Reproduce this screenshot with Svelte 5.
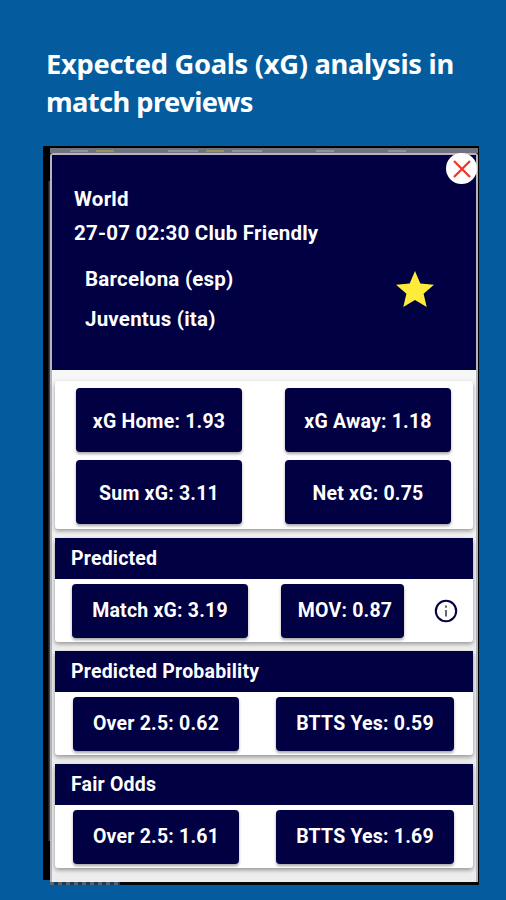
<script lang="ts">
	type Stat = { label: string; value: string; width: number };
	type Section = { title: string; layout: string; info?: boolean; stats: Stat[] };

	const summary: Stat[] = [
		{ label: 'xG Home', value: '1.93', width: 166 },
		{ label: 'xG Away', value: '1.18', width: 166 },
		{ label: 'Sum xG', value: '3.11', width: 166 },
		{ label: 'Net xG', value: '0.75', width: 166 }
	];

	const sections: Section[] = [
		{
			title: 'Predicted',
			layout: 'with-info',
			info: true,
			stats: [
				{ label: 'Match xG', value: '3.19', width: 176 },
				{ label: 'MOV', value: '0.87', width: 123 }
			]
		},
		{
			title: 'Predicted Probability',
			layout: 'pair',
			stats: [
				{ label: 'Over 2.5', value: '0.62', width: 166 },
				{ label: 'BTTS Yes', value: '0.59', width: 178 }
			]
		},
		{
			title: 'Fair Odds',
			layout: 'pair',
			stats: [
				{ label: 'Over 2.5', value: '1.61', width: 166 },
				{ label: 'BTTS Yes', value: '1.69', width: 178 }
			]
		}
	];
</script>

<main class="page">
	<h1>Expected Goals (xG) analysis in<br /><span>match previews</span></h1>

	<div class="device">
		<div class="strip">
			<i class="dim"></i><i class="gold"></i><i class="gap"></i><i class="dim wide"></i><i
				class="gold"
			></i><i class="dim wide"></i><i class="gap"></i><i class="dim"></i><i class="gap"></i><i
				class="dim"
			></i>
		</div>
		<div class="sheet">
			<header>
				<div class="match">
					<p>World</p>
					<p>27-07 02:30 Club Friendly</p>
					<p class="team first">Barcelona (esp)</p>
					<p class="team">Juventus (ita)</p>
				</div>
				<svg class="star" viewBox="2 2 20 19" aria-hidden="true">
					<path
						d="M12 17.27 18.18 21l-1.64-7.03L22 9.24l-7.19-.61L12 2 9.19 8.63 2 9.24l5.46 4.73L5.82 21z"
					/>
				</svg>
			</header>

			<div class="content">
				<section class="card summary">
					{#each summary as stat (stat.label)}
						<button class="stat tall" style:width="{stat.width}px">{stat.label}: {stat.value}</button>
					{/each}
				</section>

				{#each sections as section (section.title)}
					<section class="card">
						<h2>{section.title}</h2>
						<div class="row {section.layout}">
							{#each section.stats as stat (stat.label)}
								<button class="stat" style:width="{stat.width}px">{stat.label}: {stat.value}</button>
							{/each}
							{#if section.info}
								<svg class="info" viewBox="0 0 24 24" aria-hidden="true">
									<circle cx="12" cy="12" r="10" />
									<path d="M12 11v6M12 7v2" />
								</svg>
							{/if}
						</div>
					</section>
				{/each}
			</div>
		</div>

		<div class="under"></div>

		<button class="close" aria-label="Close">
			<svg viewBox="0 0 18 18"><path d="M1 1l16 16M17 1L1 17" /></svg>
		</button>
	</div>
</main>

<style>
	:global(body) {
		background: #045b9e;
	}

	.page {
		box-sizing: border-box;
		height: 900px;
		padding: 45px 27px 0 43px;
		overflow: hidden;
		background: #045b9e;
		color: #fff;
		font-family: Roboto, 'Liberation Sans', sans-serif;
	}

	h1 {
		height: 101px;
		margin: 0 0 0 3px;
		font: 700 27.3px/38px 'Noto Sans', 'Open Sans', sans-serif;
		letter-spacing: -0.3px;
		white-space: nowrap;
	}

	h1 span {
		letter-spacing: -0.57px;
	}

	.device {
		position: relative;
		box-sizing: border-box;
		width: 436px;
		height: 739px;
		padding: 2px 1px 3px 7px;
		background: linear-gradient(90deg, #000 40%, #55555a) 3px 35px / 4px 660px no-repeat,
			linear-gradient(#000, #000) left top / 436px 734px no-repeat,
			linear-gradient(#05070b, #05070b) 7px bottom / 429px 10px no-repeat;
	}

	.strip {
		display: flex;
		gap: 8px;
		align-items: center;
		height: 5px;
		padding: 0 20px;
		background: #70737f;
	}

	.strip i {
		flex: 0 0 18px;
		height: 2px;
	}

	.strip .dim {
		background: #9092a0;
	}

	.strip .wide {
		flex-basis: 30px;
	}

	.strip .gap {
		flex-basis: 38px;
	}

	.strip .gold {
		background: #99915f;
	}

	.sheet {
		box-sizing: border-box;
		height: 729px;
		border: solid #b5b5c0;
		border-width: 2px 2px 0;
		border-radius: 3px 3px 0 0;
		background: #f7f7f7;
	}

	header {
		display: flex;
		justify-content: space-between;
		box-sizing: border-box;
		height: 215px;
		padding: 27px 42px 0 22px;
		background: #000043;
	}

	p {
		margin: 0;
		font-size: 20.5px;
		font-weight: 700;
		line-height: 34px;
		letter-spacing: 0.22px;
		white-space: nowrap;
	}

	.team {
		padding-left: 11px;
		line-height: 40px;
	}

	.first {
		margin-top: 9px;
	}

	.star {
		width: 38px;
		height: 36px;
		margin-top: 89px;
		fill: #ffeb3b;
	}

	.content {
		display: flex;
		flex-direction: column;
		gap: 9px;
		padding: 11px 3px 0;
		background: linear-gradient(#f7f7f7, #ededed 60%);
		height: 512px;
		box-sizing: border-box;
	}

	.card {
		background: #fff;
		border-radius: 3px;
		box-shadow: 0 2px 4px rgba(0, 0, 0, 0.38);
	}

	.summary {
		display: grid;
		grid-template-columns: 166px 166px;
		column-gap: 43px;
		row-gap: 8px;
		height: 148px;
		box-sizing: border-box;
		padding: 7px 21px 5px;
	}

	h2 {
		height: 41px;
		margin: 0;
		padding-left: 16px;
		background: #000043;
		font-size: 19.5px;
		font-weight: 700;
		line-height: 42px;
		letter-spacing: 0.2px;
	}

	.row {
		display: flex;
		align-items: center;
		box-sizing: border-box;
		height: 63px;
		padding: 0 19px 0 18px;
		justify-content: space-between;
	}

	.with-info {
		padding: 0 14px 0 17px;
	}

	.with-info .info {
		margin-left: -4px;
	}

	.stat {
		height: 54px;
		padding: 1px 0 0;
		border: 0;
		border-radius: 4px;
		background: #000043;
		box-shadow: 0 2px 3px rgba(0, 0, 0, 0.35);
		color: #fff;
		font: 700 19.5px/1 Roboto, 'Liberation Sans', sans-serif;
		letter-spacing: 0.2px;
		white-space: nowrap;
	}

	.with-info .stat + .stat {
		padding-left: 5px;
	}

	.tall {
		height: 64px;
		padding-top: 3px;
	}

	.info {
		width: 26px;
		height: 26px;
		fill: none;
		stroke: #000043;
		stroke-width: 1.9;
	}

	.info circle {
		r: 9.4px;
	}

	.info path {
		stroke: #66667c;
	}

	/* traces of the page that the sheet covers */
	.under {
		width: 70px;
		height: 3px;
		background: repeating-linear-gradient(90deg, #58646f 0 4px, #163c5d 4px 8px);
	}

	/* overlaps the corner of the sheet */
	.close {
		position: absolute;
		top: 7px;
		right: 2px;
		display: grid;
		place-items: center;
		width: 31px;
		height: 31px;
		padding: 0;
		border: 0;
		border-radius: 50%;
		background: #fff;
	}

	.close svg {
		width: 18px;
		height: 18px;
		fill: none;
		stroke: #f03322;
		stroke-width: 2.2;
	}
</style>
